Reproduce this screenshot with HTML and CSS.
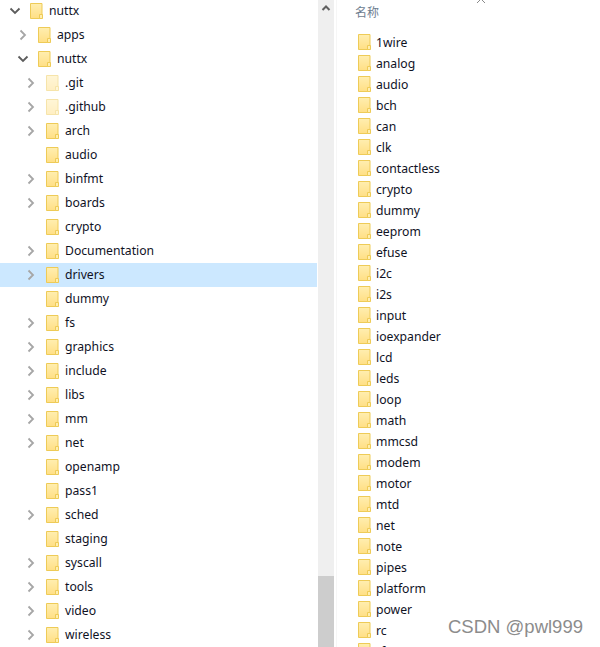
FILE: index.html
```html
<!DOCTYPE html>
<html lang="zh">
<head>
<meta charset="utf-8">
<title>nuttx</title>
<link rel="stylesheet" href="styles.css">
</head>
<body>
<svg class="defs" width="0" height="0" aria-hidden="true">
  <defs>
    <linearGradient id="fg" x1="0" y1="0" x2="0" y2="1">
      <stop offset="0" stop-color="#ffeeb0"/>
      <stop offset="1" stop-color="#ffdf85"/>
    </linearGradient>
    <symbol id="folder" viewBox="0 0 13 16">
      <path d="M.5.5h11.500v15H.5z" fill="url(#fg)" stroke="#eecb57"/>
      <path d="M9.500 15.500v-4h3v4z" fill="#ffeeb0" stroke="#eecb57"/>
    </symbol>
    <symbol id="right" viewBox="0 0 10 12">
      <path d="M2.500 1.500 7 6l-4.500 4.500" fill="none" stroke="#a6a6a6" stroke-width="1.800"/>
    </symbol>
    <symbol id="down" viewBox="0 0 12 10">
      <path d="M1.500 2.500 6 7l4.500-4.500" fill="none" stroke="#5c5c5c" stroke-width="1.800"/>
    </symbol>
  </defs>
</svg>
<main class="window">
  <nav class="tree">
    <div class="row l0"><svg class="chev-d"><use href="#down"/></svg><svg class="fd"><use href="#folder"/></svg><span>nuttx</span></div>
    <div class="row l1"><svg class="chev"><use href="#right"/></svg><svg class="fd"><use href="#folder"/></svg><span>apps</span></div>
    <div class="row l1"><svg class="chev-d"><use href="#down"/></svg><svg class="fd"><use href="#folder"/></svg><span>nuttx</span></div>
    <div class="row l2"><svg class="chev"><use href="#right"/></svg><svg class="fd hidden-item"><use href="#folder"/></svg><span>.git</span></div>
    <div class="row l2"><svg class="chev"><use href="#right"/></svg><svg class="fd hidden-item"><use href="#folder"/></svg><span>.github</span></div>
    <div class="row l2"><svg class="chev"><use href="#right"/></svg><svg class="fd"><use href="#folder"/></svg><span>arch</span></div>
    <div class="row l2"><i class="chev"></i><svg class="fd"><use href="#folder"/></svg><span>audio</span></div>
    <div class="row l2"><svg class="chev"><use href="#right"/></svg><svg class="fd"><use href="#folder"/></svg><span>binfmt</span></div>
    <div class="row l2"><svg class="chev"><use href="#right"/></svg><svg class="fd"><use href="#folder"/></svg><span>boards</span></div>
    <div class="row l2"><i class="chev"></i><svg class="fd"><use href="#folder"/></svg><span>crypto</span></div>
    <div class="row l2"><svg class="chev"><use href="#right"/></svg><svg class="fd"><use href="#folder"/></svg><span>Documentation</span></div>
    <div class="row l2 selected"><svg class="chev"><use href="#right"/></svg><svg class="fd"><use href="#folder"/></svg><span>drivers</span></div>
    <div class="row l2"><i class="chev"></i><svg class="fd"><use href="#folder"/></svg><span>dummy</span></div>
    <div class="row l2"><svg class="chev"><use href="#right"/></svg><svg class="fd"><use href="#folder"/></svg><span>fs</span></div>
    <div class="row l2"><svg class="chev"><use href="#right"/></svg><svg class="fd"><use href="#folder"/></svg><span>graphics</span></div>
    <div class="row l2"><svg class="chev"><use href="#right"/></svg><svg class="fd"><use href="#folder"/></svg><span>include</span></div>
    <div class="row l2"><svg class="chev"><use href="#right"/></svg><svg class="fd"><use href="#folder"/></svg><span>libs</span></div>
    <div class="row l2"><svg class="chev"><use href="#right"/></svg><svg class="fd"><use href="#folder"/></svg><span>mm</span></div>
    <div class="row l2"><svg class="chev"><use href="#right"/></svg><svg class="fd"><use href="#folder"/></svg><span>net</span></div>
    <div class="row l2"><i class="chev"></i><svg class="fd"><use href="#folder"/></svg><span>openamp</span></div>
    <div class="row l2"><i class="chev"></i><svg class="fd"><use href="#folder"/></svg><span>pass1</span></div>
    <div class="row l2"><svg class="chev"><use href="#right"/></svg><svg class="fd"><use href="#folder"/></svg><span>sched</span></div>
    <div class="row l2"><i class="chev"></i><svg class="fd"><use href="#folder"/></svg><span>staging</span></div>
    <div class="row l2"><svg class="chev"><use href="#right"/></svg><svg class="fd"><use href="#folder"/></svg><span>syscall</span></div>
    <div class="row l2"><svg class="chev"><use href="#right"/></svg><svg class="fd"><use href="#folder"/></svg><span>tools</span></div>
    <div class="row l2"><svg class="chev"><use href="#right"/></svg><svg class="fd"><use href="#folder"/></svg><span>video</span></div>
    <div class="row l2"><svg class="chev"><use href="#right"/></svg><svg class="fd"><use href="#folder"/></svg><span>wireless</span></div>
  </nav>
  <div class="scrollbar">
    <svg class="scroll-up" viewBox="0 0 10 8"><path d="M1.500 6 5 2.500 8.500 6" fill="none" stroke="#606060" stroke-width="2"/></svg>
    <div class="thumb"></div>
  </div>
  <section class="files">
    <header class="files-head">
      <span>名称</span>
      <svg class="sort" viewBox="0 0 10 6"><path d="M1 5 5 1l4 4" fill="none" stroke="#8a8a8a"/></svg>
    </header>
    <div class="item"><svg class="fd"><use href="#folder"/></svg><span>1wire</span></div>
    <div class="item"><svg class="fd"><use href="#folder"/></svg><span>analog</span></div>
    <div class="item"><svg class="fd"><use href="#folder"/></svg><span>audio</span></div>
    <div class="item"><svg class="fd"><use href="#folder"/></svg><span>bch</span></div>
    <div class="item"><svg class="fd"><use href="#folder"/></svg><span>can</span></div>
    <div class="item"><svg class="fd"><use href="#folder"/></svg><span>clk</span></div>
    <div class="item"><svg class="fd"><use href="#folder"/></svg><span>contactless</span></div>
    <div class="item"><svg class="fd"><use href="#folder"/></svg><span>crypto</span></div>
    <div class="item"><svg class="fd"><use href="#folder"/></svg><span>dummy</span></div>
    <div class="item"><svg class="fd"><use href="#folder"/></svg><span>eeprom</span></div>
    <div class="item"><svg class="fd"><use href="#folder"/></svg><span>efuse</span></div>
    <div class="item"><svg class="fd"><use href="#folder"/></svg><span>i2c</span></div>
    <div class="item"><svg class="fd"><use href="#folder"/></svg><span>i2s</span></div>
    <div class="item"><svg class="fd"><use href="#folder"/></svg><span>input</span></div>
    <div class="item"><svg class="fd"><use href="#folder"/></svg><span>ioexpander</span></div>
    <div class="item"><svg class="fd"><use href="#folder"/></svg><span>lcd</span></div>
    <div class="item"><svg class="fd"><use href="#folder"/></svg><span>leds</span></div>
    <div class="item"><svg class="fd"><use href="#folder"/></svg><span>loop</span></div>
    <div class="item"><svg class="fd"><use href="#folder"/></svg><span>math</span></div>
    <div class="item"><svg class="fd"><use href="#folder"/></svg><span>mmcsd</span></div>
    <div class="item"><svg class="fd"><use href="#folder"/></svg><span>modem</span></div>
    <div class="item"><svg class="fd"><use href="#folder"/></svg><span>motor</span></div>
    <div class="item"><svg class="fd"><use href="#folder"/></svg><span>mtd</span></div>
    <div class="item"><svg class="fd"><use href="#folder"/></svg><span>net</span></div>
    <div class="item"><svg class="fd"><use href="#folder"/></svg><span>note</span></div>
    <div class="item"><svg class="fd"><use href="#folder"/></svg><span>pipes</span></div>
    <div class="item"><svg class="fd"><use href="#folder"/></svg><span>platform</span></div>
    <div class="item"><svg class="fd"><use href="#folder"/></svg><span>power</span></div>
    <div class="item"><svg class="fd"><use href="#folder"/></svg><span>rc</span></div>
    <div class="item"><svg class="fd"><use href="#folder"/></svg><span>rf</span></div>
  </section>
  <div class="watermark">CSDN @pwl999</div>
</main>
</body>
</html>
```
FILE: styles.css
```css
* { box-sizing: border-box; }
html, body { margin: 0; height: 100%; overflow: hidden; background: #fff; }
.defs { display: block; height: 0; }
.window {
  position: relative;
  display: flex;
  width: 600px;
  height: 647px;
  overflow: hidden;
  font-family: "Noto Sans", "Noto Sans CJK SC", sans-serif;
  font-size: 12.200px;
  color: #10121f;
}
.tree { width: 318px; flex: none; margin-top: -1px; }
.row { display: flex; align-items: center; height: 24px; }
.row span { padding-bottom: 2px; }
.item span { padding-bottom: 0; }
.row.l0 { padding-left: 9px; }
.row.l1 { padding-left: 17px; }
.row.l2 { padding-left: 25px; }
.row.selected { background: #cce8ff; width: 317px; }
.chev, .chev-d { display: block; width: 12px; height: 12px; flex: none; margin-right: 9px; }
.fd { display: block; width: 13px; height: 16px; flex: none; margin-right: 6px; }
.hidden-item { opacity: .5; }
.scrollbar {
  position: relative;
  display: flex;
  flex-direction: column;
  justify-content: flex-end;
  width: 16px;
  flex: none;
  background: #efefef;
}
.scroll-up { position: absolute; top: 4px; left: 3px; width: 10px; height: 8px; }
.thumb { height: 71px; background: #cdcdcd; }
.files { flex: 1; padding-left: 21px; border-left: 1px solid #f6f6f6; margin-left: 2px; }
.files-head {
  position: relative;
  height: 32px;
  padding-top: 4px;
  margin-left: -3px;
  color: #6d7d8f;
  font-size: 12px;
  line-height: 18px;
}
.sort { position: absolute; top: -2px; left: 121px; width: 10px; height: 6px; }
.item { display: flex; align-items: center; height: 21px; }
.item .fd { margin-right: 5px; margin-bottom: 1px; }
.watermark {
  position: absolute;
  left: 448px;
  top: 616px;
  font-family: "Liberation Sans", sans-serif;
  font-size: 18.500px;
  line-height: 22px;
  color: #8c8c8c;
  white-space: nowrap;
  text-shadow: 0 0 2px #fff;
}
```
